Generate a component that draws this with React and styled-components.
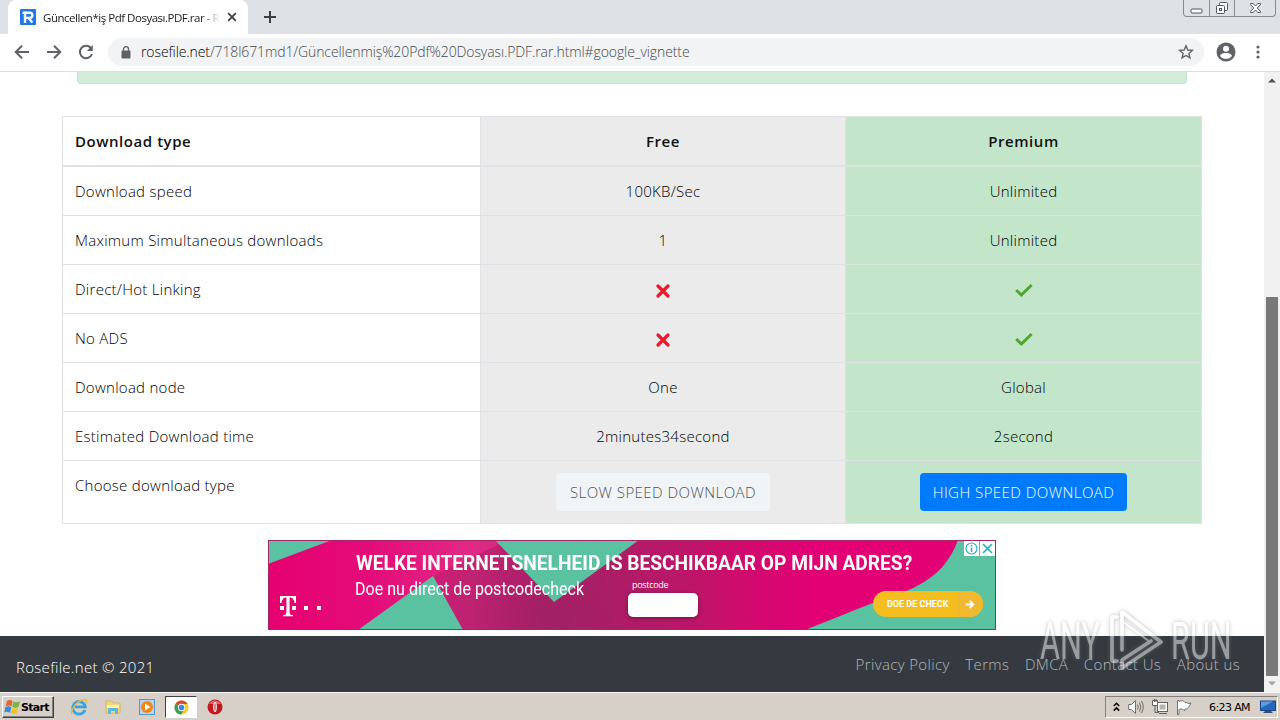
import React from 'react'
import styled, { createGlobalStyle, css } from 'styled-components'

const rows = [
    { label: 'Download speed', free: '100KB/Sec', premium: 'Unlimited' },
    { label: 'Maximum Simultaneous downloads', free: '1', premium: 'Unlimited' },
    { label: 'Direct/Hot Linking', free: 'no', premium: 'yes' },
    { label: 'No ADS', free: 'no', premium: 'yes' },
    { label: 'Download node', free: 'One', premium: 'Global' },
    { label: 'Estimated Download time', free: '2minutes34second', premium: '2second' },
]

const footerLinks = ['Privacy Policy', 'Terms', 'DMCA', 'Contact Us', 'About us']

const Cross = () => (
    <svg width="16" height="20" viewBox="0 -4 16 20">
        <path d="M3 3L13 13M13 3L3 13" stroke="#e81c2e" strokeWidth="3.3" strokeLinecap="round" />
    </svg>
)

const Check = () => (
    <svg width="20" height="18" viewBox="0 -2 20 18">
        <path d="M2.2 8L7.4 13L17.6 3" fill="none" stroke="#4fa62d" strokeWidth="3" />
    </svg>
)

const Mark = ({ value }) => {
    if (value === 'no') return <Cross />
    if (value === 'yes') return <Check />
    return value
}

const TabStripBar = () => (
    <TabStrip>
        <Tab>
            <svg width="16" height="16" viewBox="0 0 16 16">
                <rect width="16" height="16" rx="1" fill="#1e78e6" />
                <path d="M5 14V3.8H9.8A2.3 2.3 0 0 1 9.8 8.9H5M8.5 9L12.4 13.5" fill="none" stroke="#fff" strokeWidth="2.4" />
                <path d="M2.5 3.8H6" stroke="#fff" strokeWidth="2.4" />
            </svg>
            <TabTitle>Güncellen*iş Pdf Dosyası.PDF.rar - R</TabTitle>
            <svg width="10" height="10" viewBox="0 0 10 10">
                <path d="M1.2 1.2L8.8 8.8M8.8 1.2L1.2 8.8" stroke="#3c4043" strokeWidth="1.8" />
            </svg>
        </Tab>
        <NewTab width="12" height="12" viewBox="0 0 12 12">
            <path d="M6 0V12M0 6H12" stroke="#3c4043" strokeWidth="2" />
        </NewTab>
        <WindowButtons>
            <WindowButton $width={25}>
                <svg width="13" height="6" viewBox="0 0 13 6">
                    <rect x="1" y="1" width="11" height="4" rx="1" fill="#fff" stroke="#50565f" />
                </svg>
            </WindowButton>
            <WindowButton $width={25}>
                <svg width="14" height="14" viewBox="0 0 14 14" fill="#fff" stroke="#50565f">
                    <rect x="4.5" y="1.5" width="8" height="8" rx="1" />
                    <rect x="1.5" y="4.5" width="8" height="8" rx="1" />
                    <rect x="4.5" y="7.5" width="2" height="2" />
                </svg>
            </WindowButton>
            <WindowButton $width={41}>
                <svg width="13" height="12" viewBox="0 0 13 12">
                    <path d="M1.5 1.5H4.2L6.5 4L8.8 1.5H11.5V2.5L8.3 6L11.5 9.5V10.5H8.8L6.5 8L4.2 10.5H1.5V9.5L4.7 6L1.5 2.5Z" fill="#fff" stroke="#50565f" />
                </svg>
            </WindowButton>
        </WindowButtons>
    </TabStrip>
)

const AddressBar = () => (
    <Toolbar>
        <NavIcon viewBox="0 0 16 16">
            <path d="M15 8H2M8 1.7L1.7 8L8 14.3" />
        </NavIcon>
        <NavIcon viewBox="0 0 16 16">
            <path d="M1 8H14M8 1.7L14.3 8L8 14.3" />
        </NavIcon>
        <NavIcon viewBox="0 0 16 16">
            <path d="M13.2 4.4A6.2 6.2 0 1 0 14 10" />
            <path d="M14.8 1V7H8.8Z" fill="#5f6368" stroke="none" />
        </NavIcon>
        <UrlBox>
            <svg width="10" height="13" viewBox="0 0 10 13">
                <rect x="0.5" y="4.5" width="9" height="8" rx="1" fill="#5f6368" />
                <path d="M2.5 5V3.2A2.5 2.5 0 0 1 7.5 3.2V5" fill="none" stroke="#5f6368" strokeWidth="1.3" />
            </svg>
            <Url><b>rosefile.net</b>/718l671md1/Güncellenmiş%20Pdf%20Dosyası.PDF.rar.html#google_vignette</Url>
            <svg width="16" height="16" viewBox="0 0 16 16">
                <path d="M8 1.8L9.8 6L14.3 6.4L10.9 9.4L11.9 13.8L8 11.5L4.1 13.8L5.1 9.4L1.7 6.4L6.2 6Z" fill="none" stroke="#5f6368" strokeWidth="1.4" />
            </svg>
        </UrlBox>
        <svg width="20" height="20" viewBox="0 0 20 20">
            <circle cx="10" cy="10" r="9.5" fill="#5f6368" />
            <circle cx="10" cy="6.7" r="3" fill="#fff" />
            <path d="M4 14C4.5 11.5 8 11 10 11S15.5 11.5 16 14C13 17.8 7 17.8 4 14Z" fill="#fff" />
        </svg>
        <MenuDots width="4" height="14" viewBox="0 0 4 14" fill="#5f6368">
            <circle cx="2" cy="2" r="1.6" />
            <circle cx="2" cy="7" r="1.6" />
            <circle cx="2" cy="12" r="1.6" />
        </MenuDots>
    </Toolbar>
)

const BannerArt = () => (
    <Art viewBox="0 0 728 90">
        <defs>
            <linearGradient id="magenta" x1="0" x2="1">
                <stop offset="0" stopColor="#e5006f" />
                <stop offset="0.14" stopColor="#e40c79" />
                <stop offset="0.28" stopColor="#e02a85" />
                <stop offset="0.45" stopColor="#b81f6b" />
                <stop offset="0.6" stopColor="#c6116a" />
                <stop offset="0.75" stopColor="#e20074" />
                <stop offset="1" stopColor="#e20074" />
            </linearGradient>
            <radialGradient id="shade" cx="280" cy="80" r="190" gradientUnits="userSpaceOnUse">
                <stop offset="0" stopColor="#982060" stopOpacity="0.85" />
                <stop offset="0.5" stopColor="#a51c62" stopOpacity="0.5" />
                <stop offset="1" stopColor="#a51c62" stopOpacity="0" />
            </radialGradient>
        </defs>
        <rect width="728" height="90" fill="url(#magenta)" />
        <path d="M165 36L240 0H728V90H195Z" fill="url(#shade)" />
        <g fill="#5bc2a1">
            <path d="M0 0H64L0 24Z" />
            <path d="M90 90L165 36L195 90Z" />
            <path d="M227 0H371L286 62Z" />
            <path d="M537 90L602 64C645 50 675 40 690 0H728V90Z" />
        </g>
        <rect x="0.5" y="0.5" width="727" height="89" fill="none" stroke="#a8246a" />
        <g fill="#fff">
            <path d="M12 56H28V63H26.6C26 59.5 24.5 57.5 21.6 57.3V72C21.6 74.5 22.5 75.2 25 75.2V76.2H15V75.2C17.5 75.2 18.4 74.5 18.4 72V57.3C15.5 57.5 14 59.5 13.4 63H12Z" />
            <path d="M12 66H16V70H12ZM24 66H28V70H24ZM36 66H40V70H36ZM49 66H53V70H49Z" />
        </g>
    </Art>
)

const Ad = () => (
    <Banner>
        <BannerArt />
        <Headline>WELKE INTERNETSNELHEID IS BESCHIKBAAR OP MIJN ADRES?</Headline>
        <Subline>Doe nu direct de postcodecheck</Subline>
        <Postcode>
            <span>postcode</span>
            <PostcodeInput />
        </Postcode>
        <Cta>
            <CtaText>DOE DE CHECK</CtaText>
            <CtaArrow>
                <svg width="10" height="9" viewBox="0 0 10 9">
                    <path d="M0.5 4.5H8M4.8 1L8.3 4.5L4.8 8" fill="none" stroke="#fff" strokeWidth="1.9" />
                </svg>
            </CtaArrow>
        </Cta>
        <AdChoices>
            <svg width="31" height="15" viewBox="0 0 31 15" fill="none" stroke="#1fb1c8">
                <circle cx="7.5" cy="7.5" r="5.5" strokeWidth="1.2" />
                <path d="M7.5 6.5V11M7.5 4V5.5" strokeWidth="1.5" />
                <path d="M15.5 0V15" stroke="#5bc2a1" />
                <path d="M19 3L28 12M28 3L19 12" strokeWidth="1.6" />
            </svg>
        </AdChoices>
    </Banner>
)

const Watermark = () => (
    <WatermarkBox>
        <WatermarkWord>ANY</WatermarkWord>
        <svg width="56" height="62" viewBox="0 0 56 62" fill="none" stroke="#fff" strokeWidth="3.6" strokeLinejoin="round" strokeLinecap="round">
            <path d="M9 9H4V53H9" />
            <path d="M14 42V4L53 34L14 60V52L43 33" />
            <path d="M14 13L42 34" strokeWidth="2" />
        </svg>
        <WatermarkWord>RUN</WatermarkWord>
    </WatermarkBox>
)

const TaskbarIcons = () => (
    <Launchers>
        <svg width="18" height="18" viewBox="0 0 18 18" fill="none">
            <path d="M15 12A6.3 6.3 0 1 1 15.3 8.8H5" stroke="#39a3df" strokeWidth="2.8" />
            <path d="M2 16C0 13 6 4 12 2C16 0.5 17.5 2 16 5" stroke="#e8b93a" strokeWidth="1.4" />
        </svg>
        <svg width="18" height="18" viewBox="0 0 18 18">
            <path d="M2 3H8L9 5H16V15H2Z" fill="#f2d978" stroke="#d0b04e" strokeWidth="0.7" />
            <path d="M3 7H15V10H3Z" fill="#fff0ad" />
            <path d="M4 16V10H14V16H11V13H7V16Z" fill="#61b6dc" />
        </svg>
        <svg width="18" height="18" viewBox="0 0 18 18">
            <rect x="1.5" y="1.5" width="15" height="15" fill="#b9d4ed" stroke="#5796cb" />
            <circle cx="9" cy="9" r="6" fill="#f3861b" />
            <path d="M7 5.5L12.3 9L7 12.5Z" fill="#fff" />
        </svg>
        <ActiveTask>
            <svg width="15" height="15" viewBox="0 0 16 16">
                <circle cx="8" cy="8" r="7.5" fill="#f9cd2c" />
                <path d="M8 8L1.5 4.3A7.5 7.5 0 0 1 14.5 4.3H8Z" fill="#df4535" />
                <path d="M8 8L1.5 4.3A7.5 7.5 0 0 0 7.5 15.5L11 10Z" fill="#35a253" />
                <circle cx="8" cy="8" r="3.9" fill="#fff" />
                <circle cx="8" cy="8" r="3" fill="#4384ee" />
            </svg>
        </ActiveTask>
        <svg width="18" height="18" viewBox="0 0 18 18">
            <circle cx="9" cy="9" r="7.5" fill="#c41820" />
            <path d="M3 6A7 7 0 0 1 15 6Z" fill="#e3675f" />
            <ellipse cx="9" cy="9" rx="1.8" ry="5" fill="#fff" />
            <ellipse cx="9" cy="9" rx="0.6" ry="4" fill="#b0353a" />
        </svg>
    </Launchers>
)

const SystemTray = () => (
    <Tray>
        <svg width="7" height="10" viewBox="0 0 7 10" fill="none" stroke="#000" strokeWidth="1.5">
            <path d="M0.8 4L3.5 1.3L6.2 4M0.8 8.6L3.5 5.9L6.2 8.6" />
        </svg>
        <svg width="16" height="16" viewBox="0 0 16 16" fill="none" stroke="#70706c">
            <path d="M0.7 5.5H3.5L7.5 1.5V14.5L3.5 10.5H0.7Z" fill="#fff" />
            <path d="M9.5 5.5Q11 8 9.5 10.5M11.5 3.5Q14 8 11.5 12.5M13.5 2Q17 8 13.5 14" />
        </svg>
        <svg width="16" height="16" viewBox="0 0 16 16" fill="#fff" stroke="#62625e">
            <path d="M3 6V13.5H7" fill="none" />
            <rect x="5.5" y="3.5" width="10" height="9" />
            <rect x="7.500" y="5.500" width="6" height="5" fill="#b5b3ad" stroke="none" />
            <path d="M7 14.5H15M0.5 1.5H5.5V6.5H0.5ZM2.500 0V3M4 0V3" />
        </svg>
        <svg width="16" height="16" viewBox="0 0 16 16" fill="#fff" stroke="#70706c">
            <path d="M1.5 1.5V15.5H3V10.5C6 9 7 11 9 11.5V10C11 10 12 10 15 4C12 5 11 3.5 9 3.5C7 1 5 1.5 3 2.5V1.5Z" />
        </svg>
        <Clock>6:23 AM</Clock>
        <svg width="16" height="14" viewBox="0 0 16 14">
            <rect x="0.5" y="1" width="15" height="9.5" fill="#2467bb" stroke="#17478b" />
            <path d="M1 1.5H13L1 8Z" fill="#5b9be2" />
            <path d="M5 11H11L13 13H3Z" fill="#384d6a" />
        </svg>
    </Tray>
)

const App = () => (
    <>
        <GlobalStyle />
        <Screen>
            <TabStripBar />
            <AddressBar />
            <Viewport>
                <Page>
                    <Content>
                        <Notice />
                        <Table>
                            <HeadCell>Download type</HeadCell>
                            <HeadCell $tone="free">Free</HeadCell>
                            <HeadCell $tone="premium">Premium</HeadCell>
                            {rows.map((row) => (
                                <React.Fragment key={row.label}>
                                    <Cell>{row.label}</Cell>
                                    <Cell $tone="free"><Mark value={row.free} /></Cell>
                                    <Cell $tone="premium"><Mark value={row.premium} /></Cell>
                                </React.Fragment>
                            ))}
                            <LastCell>Choose download type</LastCell>
                            <LastCell $tone="free"><SlowButton>SLOW SPEED DOWNLOAD</SlowButton></LastCell>
                            <LastCell $tone="premium"><FastButton>HIGH SPEED DOWNLOAD</FastButton></LastCell>
                        </Table>
                        <Ad />
                    </Content>
                    <Footer>
                        <Copyright>Rosefile.net © 2021</Copyright>
                        <FooterNav>
                            {footerLinks.map((link) => <a key={link}>{link}</a>)}
                        </FooterNav>
                    </Footer>
                </Page>
                <Scrollbar>
                    <svg width="8" height="5" viewBox="0 0 8 5"><path d="M0 4.5L4 0.5L8 4.5Z" fill="#505050" /></svg>
                    <Thumb />
                    <svg width="8" height="5" viewBox="0 0 8 5"><path d="M0 0.5L4 4.5L8 0.5Z" fill="#a3a3a3" /></svg>
                </Scrollbar>
            </Viewport>
            <Taskbar>
                <StartButton>
                    <svg width="17" height="16" viewBox="0 0 17 16">
                        <path d="M3 2Q6 0 8.5 2L7.5 7.3Q5 5.5 1.5 7.3Z" fill="#e8622c" />
                        <path d="M9.3 2.3Q12 4 16 2.3L14.5 8Q11.5 9.5 8.3 7.7Z" fill="#77b843" />
                        <path d="M1.3 8.2Q4.5 6.5 7.3 8.2L6 14Q3.5 12 0.3 13.5Z" fill="#3d8ad8" />
                        <path d="M8.1 8.6Q11 10.4 14.3 8.9L13 14.2Q9.5 16 6.8 14.2Z" fill="#f4c32e" />
                    </svg>
                    Start
                </StartButton>
                <TaskbarIcons />
                <SystemTray />
            </Taskbar>
            <Watermark />
        </Screen>
    </>
)

const GlobalStyle = createGlobalStyle`
    *{
        box-sizing : border-box;
    }
    body{
        margin : 0;
        overflow : hidden;
    }
    svg{
        display : block;
        flex-shrink : 0;
    }
`;

const Screen = styled.div`
    position : relative;
    display : flex;
    flex-direction : column;
    width : 1280px;
    height : 720px;
    overflow : hidden;
    background-color : white;
    font-family : "Open Sans", sans-serif;
`;

const TabStrip = styled.div`
    display : flex;
    height : 34px;
    background-color : #dee1e6;
`;

const Tab = styled.div`
    display : flex;
    align-items : center;
    width : 240px;
    margin-left : 8px;
    padding : 0 11px 0 12px;
    background-color : white;
    border-radius : 8px 8px 0 0;
`;

const TabTitle = styled.div`
    width : 177px;
    margin : 0 7px;
    white-space : nowrap;
    font : 11.5px "Open Sans", sans-serif;
    letter-spacing : -0.48px;
    color : #202124;
    mask-image : linear-gradient(to right, black 90%, transparent);
`;

const NewTab = styled.svg`
    align-self : center;
    margin-left : 16px;
`;

const WindowButtons = styled.div`
    display : flex;
    height : 17px;
    margin : 0 4px 0 auto;
    border : 1px solid #858a94;
    border-top : none;
    border-radius : 0 0 4px 4px;
`;

const WindowButton = styled.div`
    display : flex;
    align-items : center;
    justify-content : center;
    width : ${({ $width }) => $width}px;
    & + &{
        border-left : 1px solid #858a94;
    }
    &:first-child{
        padding-top : 5px;
    }
`;

const Toolbar = styled.div`
    display : flex;
    align-items : center;
    height : 38px;
    padding : 0 20px 1px 14px;
    border-bottom : 1px solid #dcdfe1;
`;

const NavIcon = styled.svg`
    width : 16px;
    height : 16px;
    margin-right : 16px;
    fill : none;
    stroke : #5f6368;
    stroke-width : 2;
`;

const UrlBox = styled.div`
    display : flex;
    align-items : center;
    width : 1096px;
    height : 28px;
    margin-right : 12px;
    margin-left : -2px;
    padding : 0 10px 0 13px;
    background-color : #f1f3f4;
    border-radius : 14px;
`;

const Url = styled.div`
    flex : 1;
    margin : -1px 0 0 10px;
    font : 300 14px "Open Sans", sans-serif;
    letter-spacing : -0.1px;
    color : #45494d;
    b{
        font-weight : 300;
        color : black;
    }
`;

const MenuDots = styled.svg`
    margin-left : auto;
`;

const Viewport = styled.div`
    display : flex;
    height : 620px;
`;

const Page = styled.div`
    display : flex;
    flex-direction : column;
    width : 1264px;
`;

const Content = styled.div`
    display : flex;
    flex-direction : column;
    align-items : center;
    height : 564px;
`;

const Notice = styled.div`
    width : 1110px;
    height : 12px;
    margin-bottom : 32px;
    background-color : #d4edda;
    border : 1px solid #c3e6cb;
    border-top : none;
    border-radius : 0 0 4px 4px;
`;

const tones = {
    free: css`
        background-color : #ebebeb;
        justify-content : center;
    `,
    premium: css`
        background-color : #c3e6cb;
        justify-content : center;
    `,
};

const Table = styled.div`
    display : grid;
    grid-template-columns : 418px 365px 356px;
    width : 1140px;
    border-right : 1px solid #dee2e6;
    border-bottom : 1px solid #dee2e6;
    font-size : 15px;
    font-weight : 300;
    letter-spacing : 0.27px;
    color : black;
`;

const Cell = styled.div`
    display : flex;
    align-items : center;
    height : 49px;
    padding : 0 12px;
    border-left : 1px solid #dee2e6;
    border-top : 1px solid #dee2e6;
    ${({ $tone }) => tones[$tone]}
`;

const HeadCell = styled(Cell)`
    height : 50px;
    border-bottom : 1px solid #dee2e6;
    font-weight : 600;
    letter-spacing : 0.55px;
    color : #111;
`;

const LastCell = styled(Cell)`
    align-items : flex-start;
    height : 63px;
    padding-top : ${({ $tone }) => $tone ? 12 : 14}px;
`;

const Button = styled.button`
    height : 38px;
    padding : 0;
    border : none;
    border-radius : 4px;
    font : 300 15px "Open Sans", sans-serif;
    letter-spacing : 0.45px;
`;

const SlowButton = styled(Button)`
    width : 214px;
    background-color : #f1f4f6;
    color : #4b5258;
`;

const FastButton = styled(Button)`
    width : 207px;
    background-color : #007bff;
    color : white;
`;

const Banner = styled.div`
    position : relative;
    width : 728px;
    height : 90px;
    margin-top : 16px;
    color : white;
    font-family : Roboto, sans-serif;
    white-space : nowrap;
`;

const Art = styled.svg`
    position : absolute;
    inset : 0;
    width : 728px;
    height : 90px;
`;

const Headline = styled.div`
    position : absolute;
    left : 88px;
    top : 10px;
    font-size : 21px;
    line-height : 26px;
    font-weight : 700;
    transform : scaleX(0.912);
    transform-origin : left;
`;

const Subline = styled.div`
    position : absolute;
    left : 87px;
    top : 38px;
    font-size : 17.5px;
    line-height : 22px;
    transform : scaleX(0.918);
    transform-origin : left;
`;

const Postcode = styled.div`
    position : absolute;
    left : 360px;
    top : 39px;
    font : 9px "Open Sans", sans-serif;
    span{
        display : block;
        margin : -1px 0 1px 4px;
        line-height : 14px;
        letter-spacing : -0.3px;
    }
`;

const PostcodeInput = styled.div`
    width : 70px;
    height : 24px;
    background-color : white;
    border-radius : 5px;
    box-shadow : 0 1px 4px #0006;
`;

const Cta = styled.div`
    position : absolute;
    left : 605px;
    top : 51px;
    display : flex;
    width : 110px;
    height : 26px;
    overflow : hidden;
    border-radius : 13px;
    background-color : #f4bd20;
    font-size : 9px;
    font-weight : 700;
`;

const CtaText = styled.div`
    width : 84px;
    padding-left : 14px;
    line-height : 26px;
`;

const CtaArrow = styled.div`
    display : flex;
    align-items : center;
    width : 26px;
    padding-left : 8px;
    background-color : #f0b92f;
`;

const AdChoices = styled.div`
    position : absolute;
    top : 1px;
    right : 1px;
    background-color : white;
`;

const Footer = styled.div`
    display : flex;
    justify-content : space-between;
    height : 56px;
    padding : 0 24px 0 16px;
    background-color : #343a40;
`;

const Copyright = styled.div`
    padding-top : 4px;
    font-size : 15px;
    font-weight : 300;
    letter-spacing : 0.3px;
    line-height : 54px;
    color : white;
`;

const FooterNav = styled.div`
    display : flex;
    gap : 15.6px;
    font : 300 15px/57px "Open Sans", sans-serif;
    letter-spacing : 0.36px;
    color : #b4b8bc;
`;

const Scrollbar = styled.div`
    display : flex;
    flex-direction : column;
    align-items : center;
    width : 16px;
    padding-top : 6px;
    background-color : #f1f1f1;
`;

const Thumb = styled.div`
    width : 12px;
    height : 379px;
    margin : 214px 0 5px;
    background-color : #787878;
`;

const Taskbar = styled.div`
    display : flex;
    align-items : center;
    height : 28px;
    padding : 1px 2px 0 2px;
    background-color : #d6d0c8;
    border-top : 1px solid #f6f5f2;
`;

const StartButton = styled.div`
    display : flex;
    align-items : center;
    width : 52px;
    height : 22px;
    padding-left : 1px;
    border : 1px solid;
    border-color : white #404040 #404040 white;
    box-shadow : inset -1px -1px #808080;
    font : 700 11px "DejaVu Sans", sans-serif;
    letter-spacing : -0.7px;
    color : black;
`;

const Launchers = styled.div`
    display : flex;
    align-items : center;
    gap : 16px;
    margin-left : 16px;
`;

const ActiveTask = styled.div`
    display : flex;
    align-items : center;
    justify-content : center;
    width : 32px;
    height : 22px;
    margin : 0 -7px;
    background-color : white;
    border : 1px solid;
    border-color : #404040 white white #404040;
`;

const Tray = styled.div`
    display : flex;
    align-items : center;
    gap : 8px;
    width : 173px;
    height : 22px;
    margin-left : auto;
    padding : 0 1px 0 7px;
    border : 1px solid;
    border-color : #808080 white white #808080;
`;

const Clock = styled.div`
    margin : 0 2px 0 auto;
    font : 11px "DejaVu Sans", sans-serif;
    letter-spacing : -0.6px;
    white-space : nowrap;
    color : black;
`;

const WatermarkBox = styled.div`
    position : absolute;
    left : 1040px;
    top : 608px;
    display : flex;
    align-items : center;
    gap : 7px;
    color : white;
    opacity : 0.5;
    filter : drop-shadow(0 0 2px #777);
`;

const WatermarkWord = styled.div`
    width : 61px;
    padding-top : 5px;
    font : 400 52px/52px Roboto, sans-serif;
    transform : scaleX(0.59);
    transform-origin : left;
`;

export default App;
